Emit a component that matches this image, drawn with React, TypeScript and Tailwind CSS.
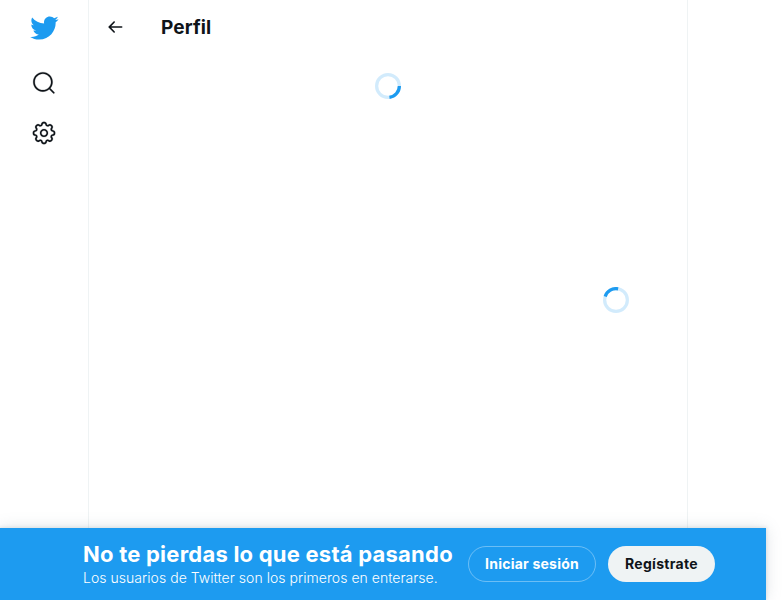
const searchPath =
  'M21.53 20.47l-3.66-3.66C19.195 15.24 20 13.214 20 11c0-4.97-4.03-9-9-9s-9 4.03-9 9 4.03 9 9 9c2.215 0 4.24-.804 5.808-2.13l3.66 3.66c.147.146.34.22.53.22s.385-.073.53-.22c.295-.293.295-.767.002-1.06zM3.5 11c0-4.135 3.365-7.5 7.5-7.5s7.5 3.365 7.5 7.5-3.365 7.5-7.5 7.5-7.5-3.365-7.5-7.5z';
const birdPath =
  'M23.643 4.937c-.835.37-1.732.62-2.675.733.962-.576 1.7-1.49 2.048-2.578-.9.534-1.897.922-2.958 1.13-.85-.904-2.06-1.47-3.4-1.47-2.572 0-4.658 2.086-4.658 4.66 0 .364.042.718.12 1.06-3.873-.195-7.304-2.05-9.602-4.868-.4.69-.63 1.49-.63 2.342 0 1.616.823 3.043 2.072 3.878-.764-.025-1.482-.234-2.11-.583v.06c0 2.257 1.605 4.14 3.737 4.568-.392.106-.803.162-1.227.162-.3 0-.593-.028-.877-.082.593 1.85 2.313 3.198 4.352 3.234-1.595 1.25-3.604 1.995-5.786 1.995-.376 0-.747-.022-1.112-.065 2.062 1.323 4.51 2.093 7.14 2.093 8.57 0 13.255-7.098 13.255-13.254 0-.2-.005-.402-.014-.602.91-.658 1.7-1.477 2.323-2.41z';
const arrowPath =
  'M20 11H7.414l4.293-4.293c.39-.39.39-1.023 0-1.414s-1.023-.39-1.414 0l-6 6c-.39.39-.39 1.023 0 1.414l6 6c.195.195.45.293.707.293s.512-.098.707-.293c.39-.39.39-1.023 0-1.414L7.414 13H20c.553 0 1-.447 1-1s-.447-1-1-1z';
const gearHub =
  'M12 8.21c-2.09 0-3.79 1.7-3.79 3.79s1.7 3.79 3.79 3.79 3.79-1.7 3.79-3.79-1.7-3.79-3.79-3.79zm0 6.08c-1.262 0-2.29-1.026-2.29-2.29S10.74 9.71 12 9.71s2.29 1.026 2.29 2.29-1.028 2.29-2.29 2.29z';
const gearRim =
  'M12.36 22.375h-.722c-1.183 0-2.154-.888-2.262-2.064l-.014-.147c-.025-.287-.207-.533-.472-.644-.286-.12-.582-.065-.798.115l-.116.097c-.868.725-2.253.663-3.06-.14l-.51-.51c-.836-.84-.896-2.154-.14-3.06l.098-.118c.186-.222.23-.523.122-.787-.11-.272-.358-.454-.646-.48l-.15-.014c-1.18-.107-2.067-1.08-2.067-2.262v-.722c0-1.183.888-2.154 2.064-2.262l.156-.014c.285-.025.53-.207.642-.473.11-.27.065-.573-.12-.795l-.094-.116c-.757-.908-.698-2.223.137-3.06l.512-.512c.804-.804 2.188-.865 3.06-.14l.116.098c.218.184.528.23.79.122.27-.112.452-.358.477-.643l.014-.153c.107-1.18 1.08-2.066 2.262-2.066h.722c1.183 0 2.154.888 2.262 2.064l.014.156c.025.285.206.53.472.64.277.117.58.062.794-.117l.12-.102c.867-.723 2.254-.662 3.06.14l.51.512c.836.838.896 2.153.14 3.06l-.1.118c-.188.22-.234.522-.123.788.112.27.36.45.646.478l.152.014c1.18.107 2.067 1.08 2.067 2.262v.723c0 1.183-.888 2.154-2.064 2.262l-.155.014c-.284.024-.53.205-.64.47-.113.272-.067.574.117.795l.1.12c.756.905.696 2.22-.14 3.06l-.51.51c-.807.804-2.19.864-3.06.14l-.115-.096c-.217-.183-.53-.23-.79-.122-.273.114-.455.36-.48.646l-.014.15c-.107 1.173-1.08 2.06-2.262 2.06zm-3.773-4.42c.3 0 .593.06.87.175.79.328 1.324 1.054 1.4 1.896l.014.147c.037.4.367.7.77.7h.722c.4 0 .73-.3.768-.7l.014-.148c.076-.842.61-1.567 1.392-1.892.793-.33 1.696-.182 2.333.35l.113.094c.178.148.366.18.493.18.206 0 .4-.08.546-.227l.51-.51c.284-.284.305-.73.048-1.038l-.1-.12c-.542-.65-.677-1.54-.352-2.323.326-.79 1.052-1.32 1.894-1.397l.155-.014c.397-.037.7-.367.7-.77v-.722c0-.4-.303-.73-.702-.768l-.152-.014c-.846-.078-1.57-.61-1.895-1.393-.326-.788-.19-1.678.353-2.327l.1-.118c.257-.31.236-.756-.048-1.04l-.51-.51c-.146-.147-.34-.227-.546-.227-.127 0-.315.032-.492.18l-.12.1c-.634.528-1.55.67-2.322.354-.788-.327-1.32-1.052-1.397-1.896l-.014-.155c-.035-.397-.365-.7-.767-.7h-.723c-.4 0-.73.303-.768.702l-.014.152c-.076.843-.608 1.568-1.39 1.893-.787.326-1.693.183-2.33-.35l-.118-.096c-.18-.15-.368-.18-.495-.18-.206 0-.4.08-.546.226l-.512.51c-.282.284-.303.73-.046 1.038l.1.118c.54.653.677 1.544.352 2.325-.327.788-1.052 1.32-1.895 1.397l-.156.014c-.397.037-.7.367-.7.77v.722c0 .4.303.73.702.768l.15.014c.848.078 1.573.612 1.897 1.396.325.786.19 1.675-.353 2.325l-.096.115c-.26.31-.238.756.046 1.04l.51.51c.146.147.34.227.546.227.127 0 .315-.03.492-.18l.116-.096c.406-.336.923-.524 1.453-.524z';

function Icon({ paths, className }: { paths: string[]; className: string }) {
  return (
    <svg viewBox="0 0 24 24" fill="currentColor" className={className} aria-hidden="true">
      {paths.map((d) => (
        <path key={d} d={d} />
      ))}
    </svg>
  );
}

function Spinner({ angle }: { angle: number }) {
  return (
    <svg viewBox="0 0 32 32" fill="none" strokeWidth="4" className="size-[26px] shrink-0 stroke-[#1d9bf0]">
      <circle cx="16" cy="16" r="14" opacity="0.2" />
      <circle cx="16" cy="16" r="14" strokeDasharray="20 80" transform={`rotate(${angle} 16 16)`} />
    </svg>
  );
}

export default function App() {
  return (
    <div className="flex h-[600px] w-[783px] flex-col overflow-hidden bg-white font-['Inter','Liberation_Sans',sans-serif] text-[#0f1419]">
      <div className="flex h-[528px] shrink-0">
        <nav className="flex w-[88px] shrink-0 flex-col items-center pt-[13px]">
          <a className="text-[#1d9bf0]"><Icon paths={[birdPath]} className="size-[30px]" /></a>
          <a className="mt-[27px]"><Icon paths={[searchPath]} className="size-[26px] stroke-current stroke-[0.2]" /></a>
          <a className="mt-6"><Icon paths={[gearHub, gearRim]} className="size-[26px] stroke-current stroke-[0.15]" /></a>
        </nav>
        <main className="flex w-[600px] flex-col border-x border-[#eff3f4]">
          <header className="flex h-[53px] items-center pl-4">
            <Icon paths={[arrowPath]} className="size-5" />
            <h1 className="ml-9 pt-0.5 text-[19px] leading-6 font-bold tracking-[0.1px]">Perfil</h1>
          </header>
          <div className="flex justify-center pt-5">
            <Spinner angle={0} />
          </div>
          <div className="mt-[188px] flex justify-end pr-[58px]">
            <Spinner angle={198} />
          </div>
        </main>
      </div>
      <footer className="flex h-[72px] w-[766px] shrink-0 items-center bg-[#1d9bf0] pl-[83px] text-white shadow-[0_0_15px_rgba(101,119,134,0.2),0_0_3px_1px_rgba(101,119,134,0.15)]">
        <div className="w-[385px] whitespace-nowrap">
          <p className="text-[22px] leading-7 font-bold tracking-[0.23px]">No te pierdas lo que está pasando</p>
          <p className="text-[14px] leading-5 font-light tracking-[0.04px]">Los usuarios de Twitter son los primeros en enterarse.</p>
        </div>
        <button className="h-9 w-32 rounded-full border border-white/35 pb-0.5 text-[14px] font-bold whitespace-nowrap tracking-[0.22px]">
          Iniciar sesión
        </button>
        <button className="ml-3 h-9 w-[107px] rounded-full bg-[#eff3f4] pb-0.5 text-[14px] font-bold whitespace-nowrap tracking-[0.3px] text-[#0f1419]">
          Regístrate
        </button>
      </footer>
    </div>
  );
}
